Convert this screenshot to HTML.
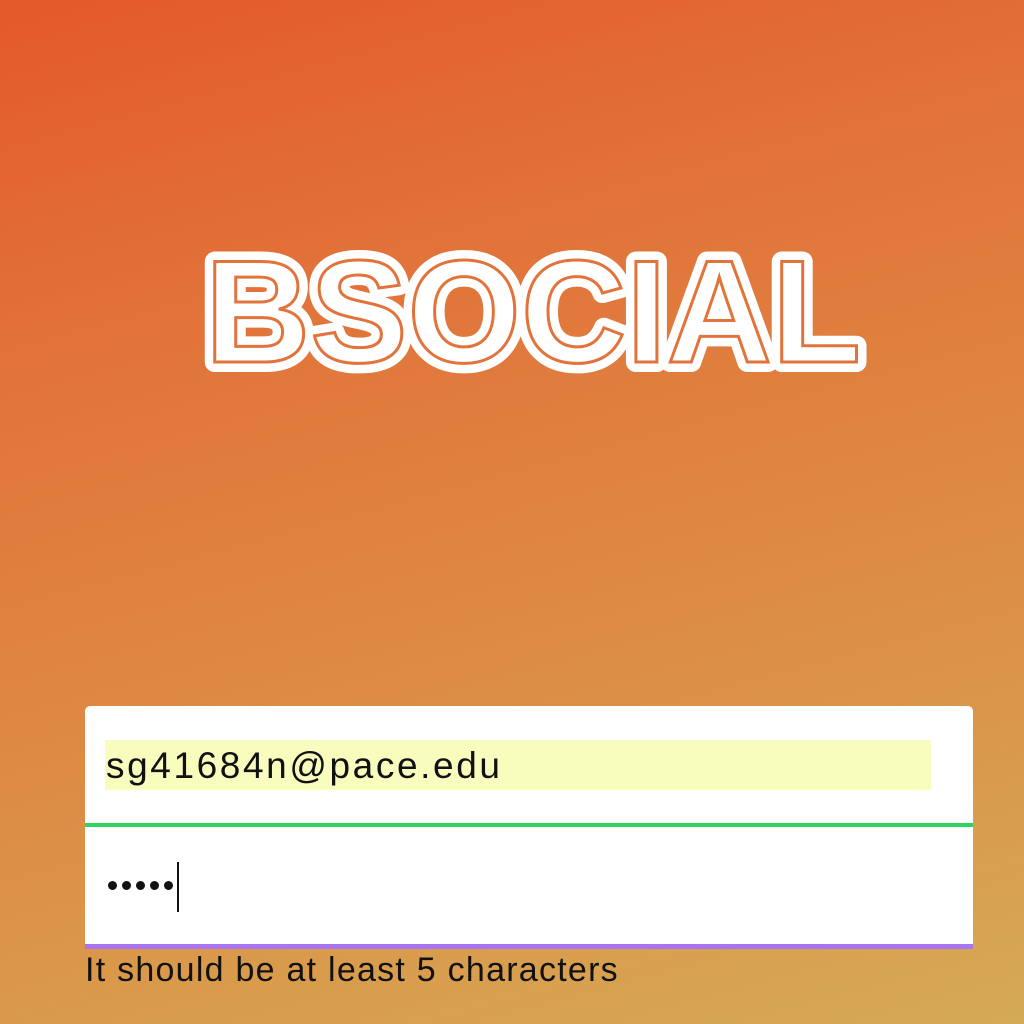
<!DOCTYPE html>
<html><head><meta charset="utf-8"><style>
html,body{margin:0;padding:0}
body{width:1024px;height:1024px;overflow:hidden;position:relative;
background:linear-gradient(165deg,#e4592a 0%,#e27038 25%,#df8742 55%,#d99a4c 80%,#d5aa55 100%);
font-family:"Liberation Sans",sans-serif}
.card{position:absolute;left:85px;top:706px;width:888px;height:238px;background:#fff;border-radius:5px 5px 0 0}
.hl{position:absolute;left:105px;top:740px;width:826px;height:50px;background:#f8fcbd}
.t1{position:absolute;left:106px;top:744px;font-size:37px;letter-spacing:2.6px;color:#111;line-height:44px;white-space:nowrap}
.g{position:absolute;left:85px;top:823px;width:888px;height:4px;background:#2ed462}
.p{position:absolute;left:85px;top:944px;width:888px;height:5px;background:#a974f2}
.dot{position:absolute;top:881px;width:9px;height:9px;border-radius:50%;background:#111}
.cur{position:absolute;left:177px;top:862px;width:2px;height:50px;background:#111}
.err{position:absolute;left:85px;top:950px;font-size:34px;letter-spacing:1.25px;color:#111;line-height:40px;white-space:nowrap}
</style></head><body>
<svg style="position:absolute;left:0;top:0" width="1024" height="1024">
<g font-family="Liberation Sans, sans-serif" font-weight="bold" font-size="146">
<text x="205" y="362" textLength="656" lengthAdjust="spacingAndGlyphs" fill="#fff" stroke="#fff" stroke-width="20" stroke-linejoin="round">BSOCIAL</text>
<text x="205" y="362" textLength="656" lengthAdjust="spacingAndGlyphs" fill="none" stroke="#e2733a" stroke-width="3">BSOCIAL</text>
</g></svg>
<div class="card"></div>
<div class="hl"></div>
<div class="t1">sg41684n@pace.edu</div>
<div class="g"></div>
<div class="dot" style="left:108px"></div>
<div class="dot" style="left:122px"></div>
<div class="dot" style="left:136px"></div>
<div class="dot" style="left:150px"></div>
<div class="dot" style="left:164px"></div>
<div class="cur"></div>
<div class="p"></div>
<div class="err">It should be at least 5 characters</div>
</body></html>
